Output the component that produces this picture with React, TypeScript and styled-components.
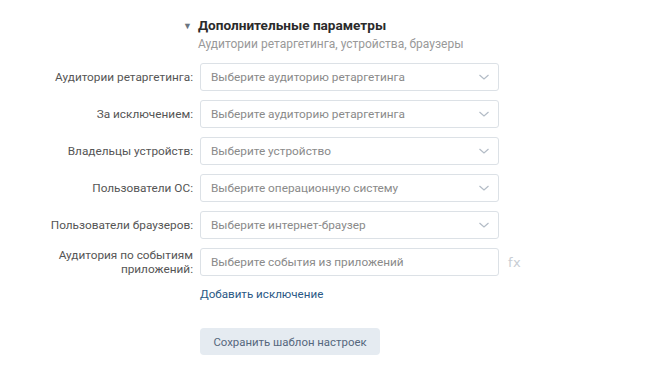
import React from 'react';
import styled, {createGlobalStyle} from 'styled-components';

const GlobalStyle = createGlobalStyle`
    html, body {
        margin: 0;
        padding: 0;
        background: #ffffff;
    }
    body {
        font-family: Roboto, "Liberation Sans", Arial, sans-serif;
        -webkit-font-smoothing: antialiased;
    }
`;

const Page = styled.div`
    width: 670px;
    height: 370px;
    box-sizing: border-box;
    padding-top: 16px;
    background: #fff;
`;

const Header = styled.div`
    display: flex;
    align-items: flex-start;
    margin-left: 183px;
    gap: 6px;
`;

const Arrow = styled.span`
    font-size: 9px;
    color: #6b7580;
    line-height: 18px;
    margin-top: 1px;
`;

const HeaderText = styled.div`
    display: flex;
    flex-direction: column;
`;

const Title = styled.div`
    font-size: 13.6px;
    font-weight: 700;
    color: #2b2b2b;
    line-height: 18px;
`;

const Subtitle = styled.div`
    font-size: 12px;
    color: #999;
    line-height: 18px;
    margin-top: 1px;
`;

const Grid = styled.div`
    display: grid;
    grid-template-columns: 193px 299px 30px;
    column-gap: 7px;
    row-gap: 9px;
    margin-top: 10px;
    align-items: center;
`;

const Label = styled.div`
    text-align: right;
    font-size: 11.8px;
    color: #555;
    line-height: 14px;
`;

const SelectBox = styled.div`
    height: 28px;
    box-sizing: border-box;
    border: 1px solid #dce1e6;
    border-radius: 3px;
    display: flex;
    align-items: center;
    justify-content: space-between;
    padding: 0 8px 0 10px;
    font-size: 11.8px;
    color: #8a8a8a;
`;

const Chevron = styled.svg`
    width: 12px;
    height: 8px;
    flex: none;
`;

const Fx = styled.span`
    font-size: 13px;
    color: #c8cdd3;
    font-family: "DejaVu Sans", sans-serif;
    letter-spacing: 0.5px;
    padding-left: 2px;
`;

const Empty = styled.div``;

const Link = styled.a`
    font-size: 11.6px;
    color: #2a5885;
    text-decoration: none;
    line-height: 16px;
    margin-top: 1px;
`;

const Footer = styled.div`
    display: grid;
    grid-template-columns: 193px auto;
    column-gap: 7px;
    margin-top: 26px;
`;

const Button = styled.button`
    width: 180px;
    height: 27px;
    border: none;
    border-radius: 4px;
    background: #e5ebf1;
    color: #55677d;
    font-family: inherit;
    font-size: 11.4px;
    padding: 0;
`;

const rows: {label: string; placeholder: string; arrow: boolean}[] = [
    {label: 'Аудитории ретаргетинга:', placeholder: 'Выберите аудиторию ретаргетинга', arrow: true},
    {label: 'За исключением:', placeholder: 'Выберите аудиторию ретаргетинга', arrow: true},
    {label: 'Владельцы устройств:', placeholder: 'Выберите устройство', arrow: true},
    {label: 'Пользователи ОС:', placeholder: 'Выберите операционную систему', arrow: true},
    {label: 'Пользователи браузеров:', placeholder: 'Выберите интернет-браузер', arrow: true},
];

const ChevronIcon = () => (
    <Chevron viewBox="0 0 12 8">
        <path d="M1.5 2 L6 6 L10.5 2" fill="none" stroke="#b3bcc6" strokeWidth="1.2" />
    </Chevron>
);

export default function App() {
    return (
        <Page>
            <GlobalStyle />
            <Header>
                <Arrow>▼</Arrow>
                <HeaderText>
                    <Title>Дополнительные параметры</Title>
                    <Subtitle>Аудитории ретаргетинга, устройства, браузеры</Subtitle>
                </HeaderText>
            </Header>
            <Grid>
                {rows.map(r => (
                    <React.Fragment key={r.label}>
                        <Label>{r.label}</Label>
                        <SelectBox>
                            {r.placeholder}
                            {r.arrow && <ChevronIcon />}
                        </SelectBox>
                        <Empty />
                    </React.Fragment>
                ))}
                <Label>
                    Аудитория по событиям
                    <br />
                    приложений:
                </Label>
                <SelectBox>Выберите события из приложений</SelectBox>
                <Fx>fx</Fx>
                <Empty />
                <Link href="#">Добавить исключение</Link>
                <Empty />
            </Grid>
            <Footer>
                <Empty />
                <Button>Сохранить шаблон настроек</Button>
            </Footer>
        </Page>
    );
}
